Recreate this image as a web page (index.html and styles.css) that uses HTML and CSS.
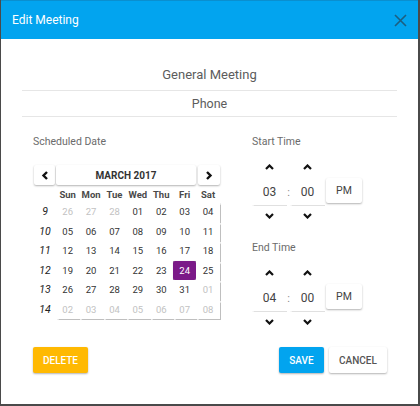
FILE: index.html
```html
<!DOCTYPE html>
<html>
<head>
<meta charset="utf-8">
<link rel="stylesheet" href="styles.css">
</head>
<body>
<div class="dialog">
  <div class="header">
    <span class="title">Edit Meeting</span>
    <svg class="close" width="13" height="13" viewBox="0 0 13 13"><path d="M1 1L12 12M12 1L1 12" stroke="#1d5e80" stroke-width="1.6" fill="none"/></svg>
  </div>
  <div class="body">
    <div class="field f1">General Meeting</div>
    <div class="field f2">Phone</div>
    <div class="main">
      <div class="left">
        <div class="label">Scheduled Date</div>
        <div class="nav">
          <div class="navbtn prev"><svg width="8" height="9" viewBox="0 0 8 9"><path d="M6 1L2.5 4.5L6 8" stroke="#111" stroke-width="2.4" fill="none"/></svg></div>
          <div class="month">MARCH 2017</div>
          <div class="navbtn next"><svg width="8" height="9" viewBox="0 0 8 9"><path d="M2 1L5.5 4.5L2 8" stroke="#111" stroke-width="2.4" fill="none"/></svg></div>
        </div>
        <div class="cal">
          <div class="wk"></div><div class="dn">Sun</div><div class="dn">Mon</div><div class="dn">Tue</div><div class="dn">Wed</div><div class="dn">Thu</div><div class="dn">Fri</div><div class="dn">Sat</div>
          <div class="wk">9</div><div class="d m">26</div><div class="d m">27</div><div class="d m">28</div><div class="d">01</div><div class="d">02</div><div class="d">03</div><div class="d">04</div>
          <div class="wk">10</div><div class="d">05</div><div class="d">06</div><div class="d">07</div><div class="d">08</div><div class="d">09</div><div class="d">10</div><div class="d">11</div>
          <div class="wk">11</div><div class="d">12</div><div class="d">13</div><div class="d">14</div><div class="d">15</div><div class="d">16</div><div class="d">17</div><div class="d">18</div>
          <div class="wk">12</div><div class="d">19</div><div class="d">20</div><div class="d">21</div><div class="d">22</div><div class="d">23</div><div class="d sel">24</div><div class="d">25</div>
          <div class="wk">13</div><div class="d">26</div><div class="d">27</div><div class="d">28</div><div class="d">29</div><div class="d">30</div><div class="d">31</div><div class="d m">01</div>
          <div class="wk">14</div><div class="d m">02</div><div class="d m">03</div><div class="d m">04</div><div class="d m">05</div><div class="d m">06</div><div class="d m">07</div><div class="d m">08</div>
        </div>
      </div>
      <div class="right">
        <div class="label">Start Time</div>
        <div class="time">
          <div class="arrow up c1"><svg width="9" height="6" viewBox="0 0 9 6"><path d="M1 5L4.5 1.5L8 5" stroke="#111" stroke-width="2.2" fill="none"/></svg></div>
          <div class="arrow up c3"><svg width="9" height="6" viewBox="0 0 9 6"><path d="M1 5L4.5 1.5L8 5" stroke="#111" stroke-width="2.2" fill="none"/></svg></div>
          <div class="num c1">03</div><div class="colon">:</div><div class="num c3">00</div><div class="pm">PM</div>
          <div class="arrow down c1"><svg width="9" height="6" viewBox="0 0 9 6"><path d="M1 1L4.5 4.5L8 1" stroke="#111" stroke-width="2.2" fill="none"/></svg></div>
          <div class="arrow down c3"><svg width="9" height="6" viewBox="0 0 9 6"><path d="M1 1L4.5 4.5L8 1" stroke="#111" stroke-width="2.2" fill="none"/></svg></div>
        </div>
        <div class="label end">End Time</div>
        <div class="time">
          <div class="arrow up c1"><svg width="9" height="6" viewBox="0 0 9 6"><path d="M1 5L4.5 1.5L8 5" stroke="#111" stroke-width="2.2" fill="none"/></svg></div>
          <div class="arrow up c3"><svg width="9" height="6" viewBox="0 0 9 6"><path d="M1 5L4.5 1.5L8 5" stroke="#111" stroke-width="2.2" fill="none"/></svg></div>
          <div class="num c1">04</div><div class="colon">:</div><div class="num c3">00</div><div class="pm">PM</div>
          <div class="arrow down c1"><svg width="9" height="6" viewBox="0 0 9 6"><path d="M1 1L4.5 4.5L8 1" stroke="#111" stroke-width="2.2" fill="none"/></svg></div>
          <div class="arrow down c3"><svg width="9" height="6" viewBox="0 0 9 6"><path d="M1 1L4.5 4.5L8 1" stroke="#111" stroke-width="2.2" fill="none"/></svg></div>
        </div>
      </div>
    </div>
    <div class="actions">
      <button class="btn delete">DELETE</button>
      <div class="spacer"></div>
      <button class="btn save">SAVE</button>
      <button class="btn cancel">CANCEL</button>
    </div>
  </div>
</div>
</body>
</html>
```
FILE: styles.css
```css
html, body { margin: 0; padding: 0; }
body {
  background: #4a4a4a;
  width: 420px;
  height: 406px;
  overflow: hidden;
  font-family: Roboto, "Liberation Sans", sans-serif;
}
.dialog {
  width: 417px;
  height: 404px;
  margin-left: 1px;
  background: #fff;
  display: flex;
  flex-direction: column;
}
.header {
  height: 39px;
  background: #02a4ef;
  border-top: 1px solid #0a8fcf;
  box-sizing: border-box;
  display: flex;
  align-items: center;
  padding: 0 11px 0 11px;
}
.title { color: #fff; font-size: 12px; flex: 1; padding-bottom: 1px; }
.body { padding: 0 21px; flex: 1; display: flex; flex-direction: column; }
.field {
  text-align: center;
  color: #5c5c5c;
  border-bottom: 1px solid #e6e6e6;
  font-size: 13px;
}
.f1 { margin-top: 21px; height: 28px; padding-top: 2px; line-height: 26px; }
.f2 { height: 25px; line-height: 25px; font-size: 12.5px; }
.main { display: flex; padding-left: 11px; margin-top: 18px; }
.left { width: 187px; }
.label { font-size: 10.5px; color: #6b6b6b; line-height: 14px; }
.nav { display: flex; margin-top: 16px; margin-left: 1px; height: 20px; gap: 1px; }
.navbtn, .month {
  background: #fff;
  box-shadow: 0 1px 2px rgba(0,0,0,0.3);
  border-radius: 2px;
  display: flex; align-items: center; justify-content: center;
}
.prev { width: 21px; }
.month { width: 140px; font-size: 10px; font-weight: 700; color: #333; }
.next { width: 22px; margin-left: 1px; }
.cal {
  display: grid;
  grid-template-columns: 22px repeat(7, 23.4px);
  grid-template-rows: 16px repeat(6, 19.5px);
  margin-left: 1px;
  margin-top: 1px;
}
.wk { font-style: italic; color: #222; font-size: 10.5px; display: flex; align-items: center; justify-content: center; }
.dn { font-size: 9.5px; font-weight: 700; color: #4a4a4a; display: flex; align-items: center; justify-content: center; }
.d {
  font-size: 9.5px; color: #333;
  display: flex; align-items: center; justify-content: center;
  background: #fff;
  box-shadow: 0.5px 0.5px 1px rgba(0,0,0,0.25);
}
.d.m { color: #c2c2c2; }
.d.sel { background: #7b1a88; color: #fff; border-radius: 2px; }
.right { width: 120px; margin-left: 32px; }
.time {
  display: grid;
  grid-template-columns: 35px 3px 35px 37px;
  grid-template-rows: 19px 29px 21px;
  margin-top: 8px;
}
.arrow { display: flex; align-items: center; justify-content: center; }
.up { grid-row: 1; }
.down { grid-row: 3; }
.c1 { grid-column: 1; }
.c3 { grid-column: 3; }
.num {
  grid-row: 2;
  font-size: 12px; color: #444;
  display: flex; align-items: center; justify-content: center;
  box-shadow: -0.5px 0.5px 1px rgba(0,0,0,0.12);
  padding-top: 3px;
}
.colon { grid-row: 2; grid-column: 2; font-size: 11px; color: #888; display: flex; align-items: center; justify-content: center; padding-top: 3px; }
.pm {
  grid-row: 2; grid-column: 4;
  margin-left: 1px;
  margin-top: 2px;
  font-size: 10.5px; color: #444;
  display: flex; align-items: center; justify-content: center;
  background: #fff;
  box-shadow: 0 1px 2px rgba(0,0,0,0.3);
  border-radius: 2px;
  height: 25px;
}
.end { margin-top: 15px; }
.actions { display: flex; padding-left: 11px; margin-top: 15px; padding-right: 10px; gap: 5px; }
.spacer { flex: 1; }
.btn {
  height: 26px;
  border: none;
  border-radius: 2px;
  font-family: Roboto, "Liberation Sans", sans-serif;
  font-size: 10px;
  font-weight: 500;
  box-shadow: 0 1px 2px rgba(0,0,0,0.3);
  padding: 0;
}
.delete { width: 55px; background: #ffb902; color: #fff; }
.save { width: 45px; background: #02a4ef; color: #fff; }
.cancel { width: 58px; background: #fff; color: #555; }
```
